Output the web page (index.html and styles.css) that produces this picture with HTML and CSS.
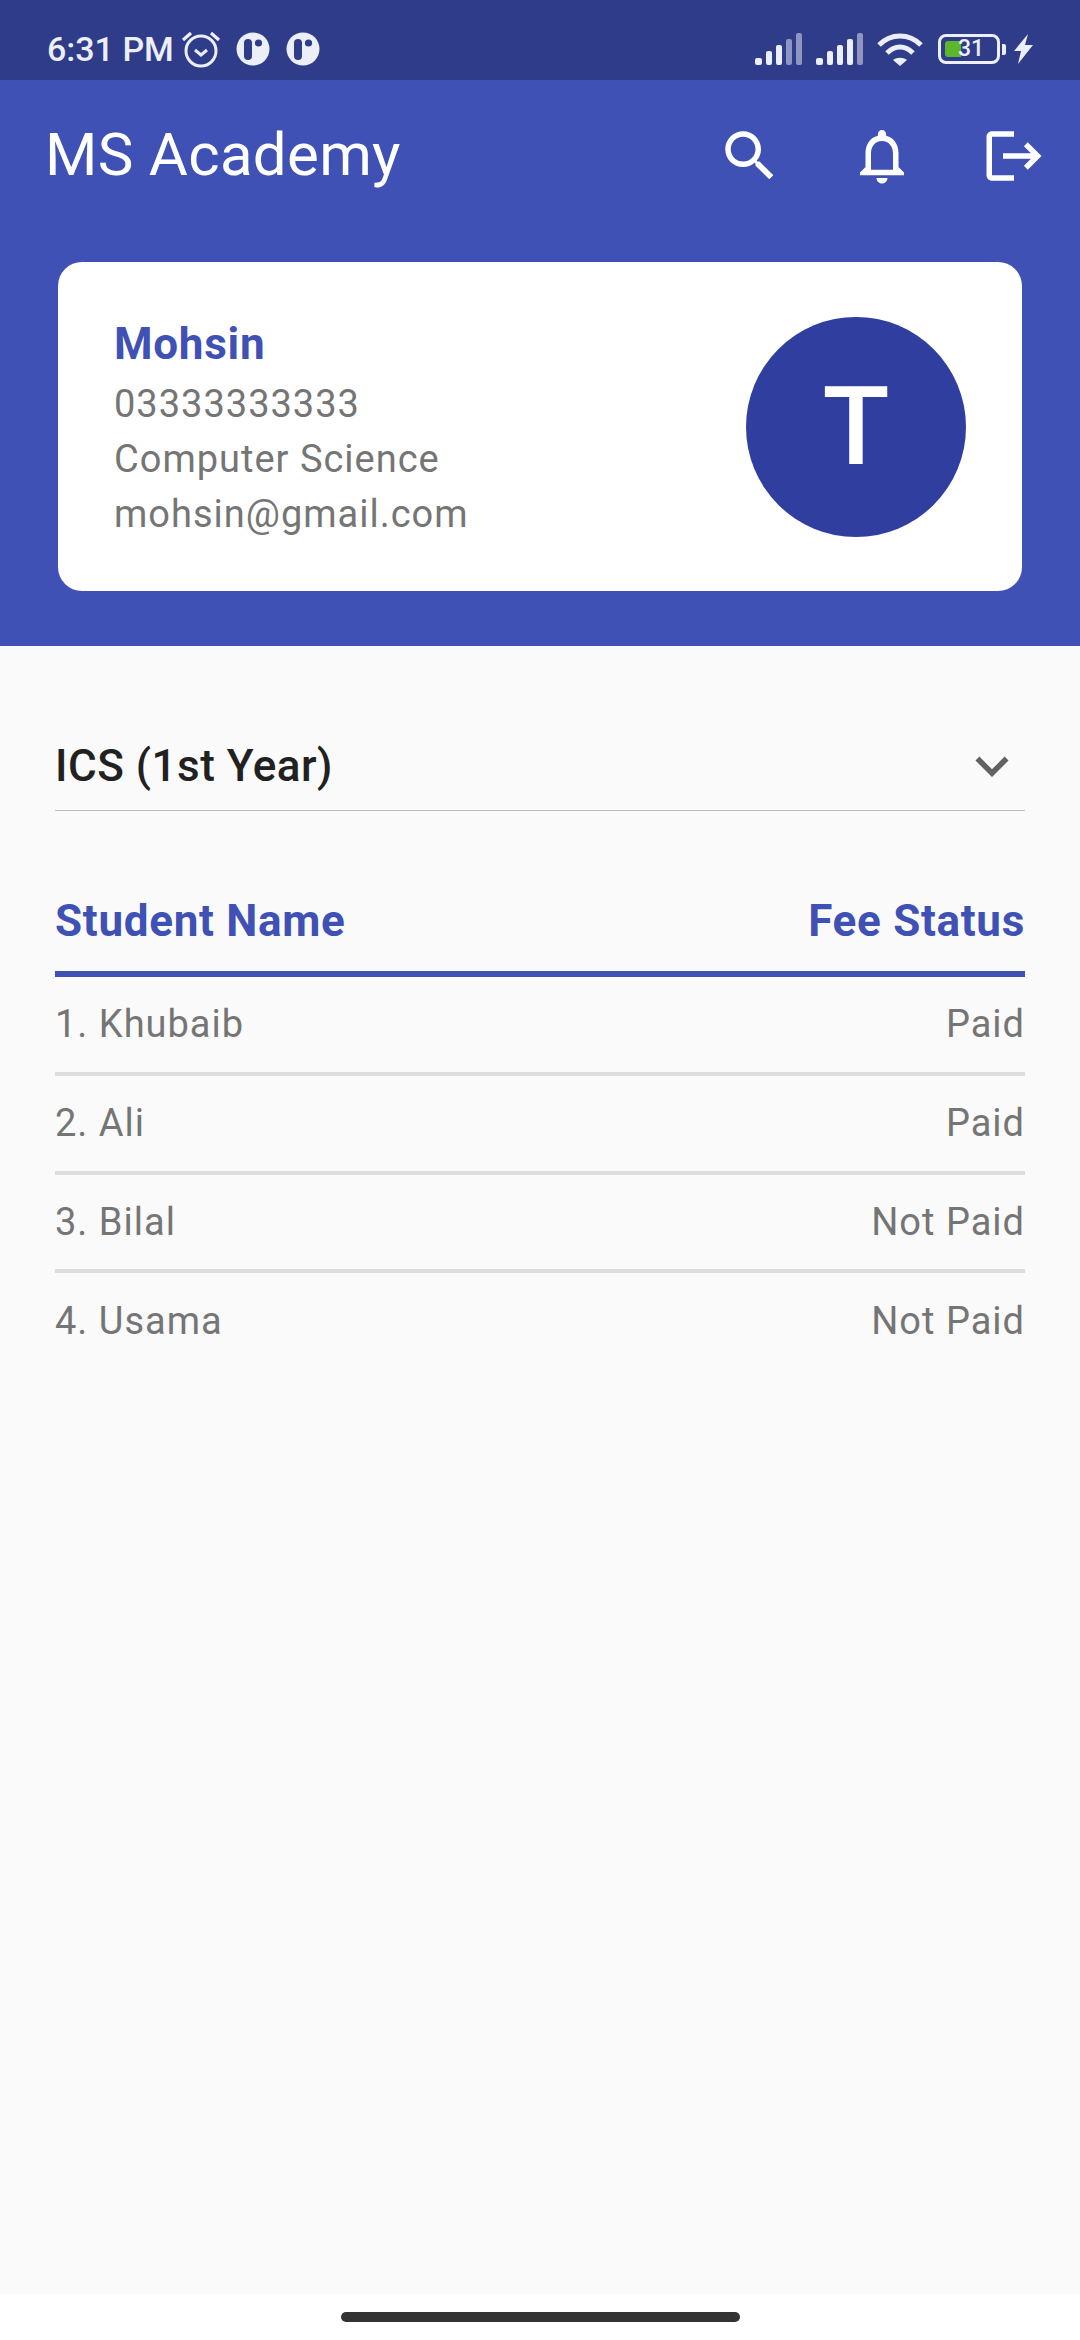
FILE: index.html
```html
<!DOCTYPE html>
<html lang="en">
<head>
    <meta charset="UTF-8">
    <meta name="viewport" content="width=device-width, initial-scale=1.0">
    <title>MS Academy</title>
    <link rel="stylesheet" href="styles.css">
</head>
<body>
    <div class="status-bar">
        <div class="status-left">
            <span class="status-time">6:31 PM</span>
            <svg class="alarm" viewBox="0 0 40 38" fill="none" stroke="#eceef8" stroke-width="3">
                <circle cx="20" cy="21" r="15"/>
                <path d="M14 20l6 5 6-5" stroke-width="3"/>
                <path d="M2 10L10 3M38 10L30 3" stroke-width="3.2"/>
            </svg>
            <svg class="dot-icon" viewBox="0 0 34 34">
                <circle cx="17" cy="17" r="16.5" fill="#eceef8"/>
                <rect x="8" y="7" width="8" height="21" rx="4" fill="#2f3c89"/>
                <circle cx="22.5" cy="11" r="3.6" fill="#2f3c89"/>
            </svg>
            <svg class="dot-icon" viewBox="0 0 34 34">
                <circle cx="17" cy="17" r="16.5" fill="#eceef8"/>
                <rect x="8" y="7" width="8" height="21" rx="4" fill="#2f3c89"/>
                <circle cx="22.5" cy="11" r="3.6" fill="#2f3c89"/>
            </svg>
        </div>
        <div class="status-right">
            <svg class="signal" viewBox="0 0 48 32" fill="#eceef8">
                <rect x="0" y="25" width="7" height="7" rx="2"/>
                <rect x="11" y="18" width="6" height="14" rx="2"/>
                <rect x="21" y="12" width="6" height="20" rx="2"/>
                <rect x="31" y="6" width="6" height="26" rx="2" opacity="0.5"/>
                <rect x="41" y="0" width="6" height="32" rx="2" opacity="0.5"/>
            </svg>
            <svg class="signal" viewBox="0 0 48 32" fill="#eceef8">
                <rect x="0" y="25" width="7" height="7" rx="2"/>
                <rect x="11" y="18" width="6" height="14" rx="2"/>
                <rect x="21" y="12" width="6" height="20" rx="2"/>
                <rect x="31" y="6" width="6" height="26" rx="2"/>
                <rect x="41" y="0" width="6" height="32" rx="2" opacity="0.5"/>
            </svg>
            <svg class="wifi" viewBox="0 0 46 34" fill="none" stroke="#eceef8" stroke-width="5">
                <path d="M2 13C14 1 32 1 44 13"/>
                <path d="M10 21C18 13 28 13 36 21"/>
                <path d="M23 34l-7-6c4-3 10-3 14 0z" fill="#eceef8" stroke="none"/>
            </svg>
            <div class="battery">
                <div class="battery-body">
                    <span class="battery-fill"></span>
                    <span class="battery-num">31</span>
                </div>
                <span class="battery-nub"></span>
            </div>
            <svg class="bolt" viewBox="0 0 19 30" fill="#eceef8">
                <path d="M14 0L0 17h7L4 30l15-19h-8z"/>
            </svg>
        </div>
    </div>

    <header class="header">
        <div class="toolbar">
            <span class="app-title">MS Academy</span>
            <div class="toolbar-icons">
                <svg class="icon" viewBox="0 0 24 24" fill="#fff">
                    <path d="M15.5 14h-.79l-.28-.27C15.41 12.59 16 11.11 16 9.5 16 5.91 13.09 3 9.5 3S3 5.91 3 9.5 5.91 16 9.5 16c1.61 0 3.09-.59 4.23-1.57l.27.28v.79l5 4.99L20.49 19l-4.99-5zm-6 0C7.01 14 5 11.99 5 9.5S7.01 5 9.5 5 14 7.01 14 9.5 11.99 14 9.5 14z"/>
                </svg>
                <svg class="icon" viewBox="0 0 24 24" fill="#fff">
                    <path d="M12 22c1.1 0 2-.9 2-2h-4c0 1.1.9 2 2 2zm6-6v-5c0-3.07-1.63-5.64-4.5-6.32V4c0-.83-.67-1.5-1.5-1.5s-1.5.67-1.5 1.5v.68C7.64 5.36 6 7.92 6 11v5l-2 2v1h16v-1l-2-2zm-2 1H8v-6c0-2.48 1.51-4.5 4-4.5s4 2.02 4 4.5v6z"/>
                </svg>
                <svg class="icon" viewBox="0 0 24 24" fill="#fff">
                    <path d="M17 7l-1.41 1.41L18.17 11H8v2h10.17l-2.58 2.58L17 17l5-5zM4 5h8V3H4c-1.1 0-2 .9-2 2v14c0 1.1.9 2 2 2h8v-2H4V5z"/>
                </svg>
            </div>
        </div>
        <div class="profile-card">
            <div class="profile-info">
                <div class="profile-name">Mohsin</div>
                <div class="profile-line">03333333333</div>
                <div class="profile-line">Computer Science</div>
                <div class="profile-line">mohsin@gmail.com</div>
            </div>
            <div class="avatar">T</div>
        </div>
    </header>

    <main class="content">
        <div class="dropdown">
            <span class="dropdown-value">ICS (1st Year)</span>
            <svg class="dropdown-arrow" viewBox="0 0 24 24" fill="#616161">
                <path d="M16.59 8.59L12 13.17 7.41 8.59 6 10l6 6 6-6z"/>
            </svg>
        </div>

        <div class="table-head">
            <span>Student Name</span>
            <span>Fee Status</span>
        </div>
        <div class="table-row"><span>1. Khubaib</span><span>Paid</span></div>
        <div class="table-row"><span>2. Ali</span><span>Paid</span></div>
        <div class="table-row"><span>3. Bilal</span><span>Not Paid</span></div>
        <div class="table-row"><span>4. Usama</span><span>Not Paid</span></div>
    </main>

    <div class="nav-bar">
        <span class="home-pill"></span>
    </div>
</body>
</html>
```

FILE: styles.css
```css
* {
    box-sizing: border-box;
}

html, body {
    margin: 0;
    padding: 0;
}

body {
    width: 1080px;
    height: 2340px;
    display: flex;
    flex-direction: column;
    font-family: Roboto, "Noto Sans", sans-serif;
    background: #fff;
    overflow: hidden;
}

/* status bar */
.status-bar {
    height: 80px;
    flex: none;
    display: flex;
    justify-content: space-between;
    align-items: center;
    padding: 18px 47px 0 47px;
    background: #2f3c89;
    color: #eceef8;
}

.status-left {
    display: flex;
    align-items: center;
}

.status-time {
    font-size: 34px;
    font-weight: 500;
    line-height: 40px;
    margin-right: 7px;
}

.alarm {
    width: 40px;
    height: 38px;
    margin-right: 15px;
}

.dot-icon {
    width: 34px;
    height: 34px;
    margin-right: 16px;
}

.status-right {
    display: flex;
    align-items: center;
}

.signal {
    width: 48px;
    height: 32px;
    margin-right: 13px;
}

.wifi {
    width: 46px;
    height: 34px;
    margin-right: 15px;
}

.battery {
    display: flex;
    align-items: center;
    margin-right: 8px;
}

.battery-body {
    position: relative;
    width: 62px;
    height: 30px;
    border: 3px solid #eceef8;
    border-radius: 8px;
}

.battery-fill {
    position: absolute;
    left: 4px;
    top: 4px;
    bottom: 4px;
    width: 16px;
    border-radius: 3px 0 0 3px;
    background: #5cb82a;
}

.battery-num {
    position: absolute;
    left: 17px;
    top: 0;
    font-size: 23px;
    line-height: 24px;
    font-weight: 500;
}

.battery-nub {
    width: 4px;
    height: 11px;
    margin-left: 2px;
    border-radius: 0 2px 2px 0;
    background: #eceef8;
}

.bolt {
    width: 19px;
    height: 30px;
}

/* header with profile */
.header {
    flex: none;
    height: 566px;
    padding: 0 58px;
    background: #3f51b5;
}

.toolbar {
    height: 152px;
    margin: 0 -58px 30px;
    padding: 0 33px 0 45px;
    display: flex;
    justify-content: space-between;
    align-items: center;
}

.app-title {
    font-size: 60px;
    letter-spacing: 0.3px;
    padding-bottom: 3px;
    color: #fff;
}

.toolbar-icons {
    display: flex;
    gap: 66px;
}

.icon {
    width: 66px;
    height: 66px;
    display: block;
}

.profile-card {
    height: 329px;
    padding: 0 56px;
    display: flex;
    justify-content: space-between;
    align-items: center;
    background: #fff;
    border-radius: 24px;
}

.profile-info {
    padding-top: 3px;
}

.profile-name {
    font-size: 44px;
    font-weight: 700;
    line-height: 60px;
    letter-spacing: 0.75px;
    margin-bottom: 3px;
    color: #3f51b5;
}

.profile-line {
    font-size: 38px;
    line-height: 55px;
    letter-spacing: 1px;
    color: #757575;
}

.avatar {
    width: 220px;
    height: 220px;
    display: flex;
    justify-content: center;
    align-items: center;
    border-radius: 50%;
    font-size: 110px;
    font-weight: 500;
    color: #fff;
    background: #303f9f;
}

/* dropdown and fee table */
.content {
    flex: 1;
    padding: 0 55px;
    background: #fafafa;
}

.dropdown {
    height: 165px;
    padding-top: 76px;
    display: flex;
    justify-content: space-between;
    align-items: center;
    border-bottom: 1.5px solid #bdbdbd;
}

.dropdown-value {
    font-size: 44px;
    font-weight: 500;
    letter-spacing: 0.5px;
    color: #212121;
}

.dropdown-arrow {
    width: 66px;
    height: 66px;
}

.table-head {
    height: 166px;
    padding-top: 60px;
    display: flex;
    justify-content: space-between;
    align-items: center;
    border-bottom: 6px solid #3f51b5;
    font-size: 44px;
    font-weight: 700;
    letter-spacing: 0.7px;
    color: #3f51b5;
}

.table-row {
    height: 98.75px;
    display: flex;
    justify-content: space-between;
    align-items: center;
    border-bottom: 4px solid #ddd;
    font-size: 38px;
    letter-spacing: 1px;
    color: #757575;
}

.table-row:last-child {
    border-bottom-color: transparent;
}

/* gesture bar */
.nav-bar {
    flex: none;
    height: 46px;
    display: flex;
    justify-content: center;
    padding-top: 18px;
    background: #fff;
}

.home-pill {
    width: 399px;
    height: 10px;
    border-radius: 5px;
    background: #333;
}
```
